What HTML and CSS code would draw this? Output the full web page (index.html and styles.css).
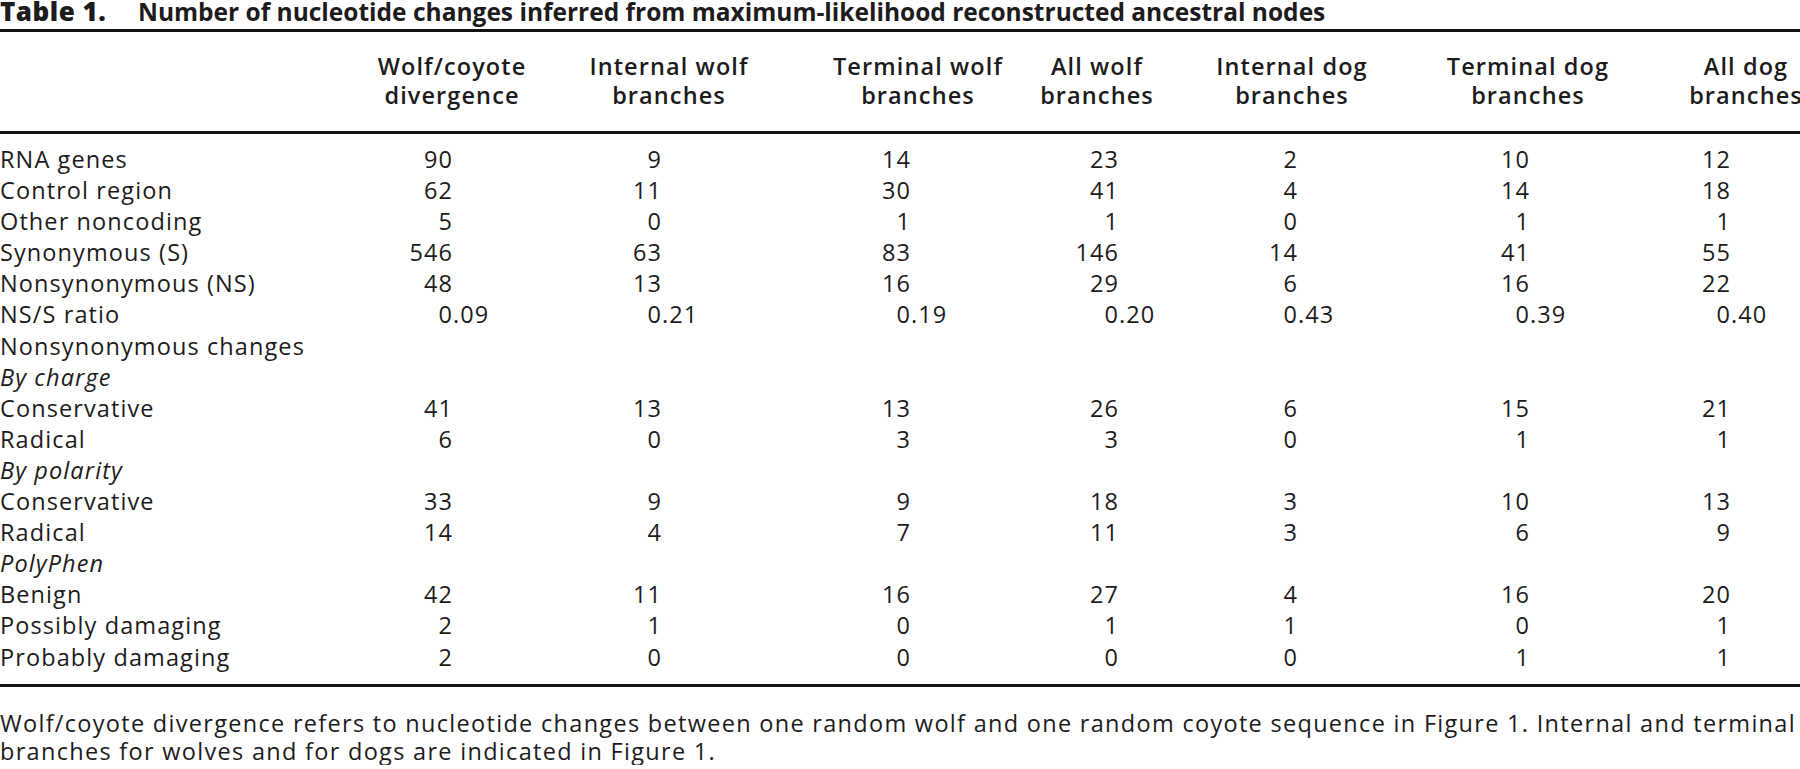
FILE: index.html
```html
<!DOCTYPE html>
<html lang="en">
<head>
<meta charset="utf-8">
<title>Table 1</title>
<link rel="stylesheet" href="styles.css">
</head>
<body>
<div class="sheet">
  <p class="caption"><span class="caption-label">Table 1.</span>Number of nucleotide changes inferred from maximum-likelihood reconstructed ancestral nodes</p>
  <table class="data">
    <colgroup>
      <col class="c-label"><col class="c1"><col class="c2"><col class="c3"><col class="c4"><col class="c5"><col class="c6"><col class="c7">
    </colgroup>
    <thead>
      <tr>
        <th></th>
        <th>Wolf/coyote<br>divergence</th>
        <th>Internal wolf<br>branches</th>
        <th>Terminal wolf<br>branches</th>
        <th>All wolf<br>branches</th>
        <th>Internal dog<br>branches</th>
        <th>Terminal dog<br>branches</th>
        <th>All dog<br>branches</th>
      </tr>
    </thead>
    <tbody>
      <tr><td>RNA genes</td><td>90</td><td>9</td><td>14</td><td>23</td><td>2</td><td>10</td><td>12</td></tr>
      <tr><td>Control region</td><td>62</td><td>11</td><td>30</td><td>41</td><td>4</td><td>14</td><td>18</td></tr>
      <tr><td>Other noncoding</td><td>5</td><td>0</td><td>1</td><td>1</td><td>0</td><td>1</td><td>1</td></tr>
      <tr><td>Synonymous (S)</td><td>546</td><td>63</td><td>83</td><td>146</td><td>14</td><td>41</td><td>55</td></tr>
      <tr><td>Nonsynonymous (NS)</td><td>48</td><td>13</td><td>16</td><td>29</td><td>6</td><td>16</td><td>22</td></tr>
      <tr><td>NS/S ratio</td><td>0<span class="frac">.09</span></td><td>0<span class="frac">.21</span></td><td>0<span class="frac">.19</span></td><td>0<span class="frac">.20</span></td><td>0<span class="frac">.43</span></td><td>0<span class="frac">.39</span></td><td>0<span class="frac">.40</span></td></tr>
      <tr><td class="section" colspan="8">Nonsynonymous changes</td></tr>
      <tr><td class="section sub" colspan="8">By charge</td></tr>
      <tr><td>Conservative</td><td>41</td><td>13</td><td>13</td><td>26</td><td>6</td><td>15</td><td>21</td></tr>
      <tr><td>Radical</td><td>6</td><td>0</td><td>3</td><td>3</td><td>0</td><td>1</td><td>1</td></tr>
      <tr><td class="section sub" colspan="8">By polarity</td></tr>
      <tr><td>Conservative</td><td>33</td><td>9</td><td>9</td><td>18</td><td>3</td><td>10</td><td>13</td></tr>
      <tr><td>Radical</td><td>14</td><td>4</td><td>7</td><td>11</td><td>3</td><td>6</td><td>9</td></tr>
      <tr><td class="section sub" colspan="8">PolyPhen</td></tr>
      <tr><td>Benign</td><td>42</td><td>11</td><td>16</td><td>27</td><td>4</td><td>16</td><td>20</td></tr>
      <tr><td>Possibly damaging</td><td>2</td><td>1</td><td>0</td><td>1</td><td>1</td><td>0</td><td>1</td></tr>
      <tr><td>Probably damaging</td><td>2</td><td>0</td><td>0</td><td>0</td><td>0</td><td>1</td><td>1</td></tr>
    </tbody>
  </table>
  <p class="note">Wolf/coyote divergence refers to nucleotide changes between one random wolf and one random coyote sequence in Figure 1. Internal and terminal branches for wolves and for dogs are indicated in Figure 1.</p>
</div>
</body>
</html>
```

FILE: styles.css
```css
html, body {
  margin: 0;
  padding: 0;
  background: #ffffff;
  overflow: hidden;
}

.sheet {
  width: 1861px;
  color: #1d1b1c;
  font-family: "Open Sans", "Noto Sans", sans-serif;
  font-size: 23.5px;
  letter-spacing: 1.1px;
}

.caption {
  margin: 0 0 5px 0;
  height: 24px;
  line-height: 23px;
  font-size: 24.5px;
  font-weight: 700;
  letter-spacing: 0;
  white-space: nowrap;
}

.caption-label {
  display: inline-block;
  width: 138px;
  font-size: 26px;
  font-weight: 800;
  letter-spacing: 0.5px;
}

.data {
  width: 1861px;
  table-layout: fixed;
  border-collapse: collapse;
  border-top: 3px solid #151314;
  border-bottom: 3px solid #151314;
}

.c-label { width: 344px; }
.c1 { width: 216px; }
.c2 { width: 234px; }
.c3 { width: 215px; }
.c4 { width: 186px; }
.c5 { width: 215px; }
.c6 { width: 229px; }
.c7 { width: 222px; }

.data thead th {
  padding: 20px 0 21px 0;
  line-height: 29px;
  font-weight: 600;
  text-align: center;
  white-space: nowrap;
  border-bottom: 3px solid #151314;
}

/* nudge each heading onto the centre of its figures */
.data thead th:nth-child(3) { padding-right: 16px; }
.data thead th:nth-child(4) { padding-left: 33px; }
.data thead th:nth-child(5) { padding-right: 10px; }
.data thead th:nth-child(6) { padding-right: 21px; }
.data thead th:nth-child(7) { padding-left: 7px; }
.data thead th:nth-child(8) { padding-right: 8px; }

.data td {
  padding: 0;
  line-height: 31.1px;
  white-space: nowrap;
  text-align: right;
}

.data td:first-child {
  text-align: left;
}

.data tbody tr:first-child td { padding-top: 10px; }
.data tbody tr:last-child td { padding-bottom: 11px; }

.data td:nth-child(2) { padding-right: 107px; }
.data td:nth-child(3) { padding-right: 132px; }
.data td:nth-child(4) { padding-right: 98px; }
.data td:nth-child(5) { padding-right: 76px; }
.data td:nth-child(6) { padding-right: 112px; }
.data td:nth-child(7) { padding-right: 109px; }
.data td:nth-child(8) { padding-right: 130px; }

.data td.section {
  text-align: left;
  padding-right: 0;
}

.data td.sub {
  font-style: italic;
}

.frac {
  display: inline-block;
  width: 0;
  text-align: left;
  white-space: nowrap;
}

.note {
  margin: 22px 0 0 0;
  line-height: 28.3px;
  letter-spacing: 1.3px;
}
```
